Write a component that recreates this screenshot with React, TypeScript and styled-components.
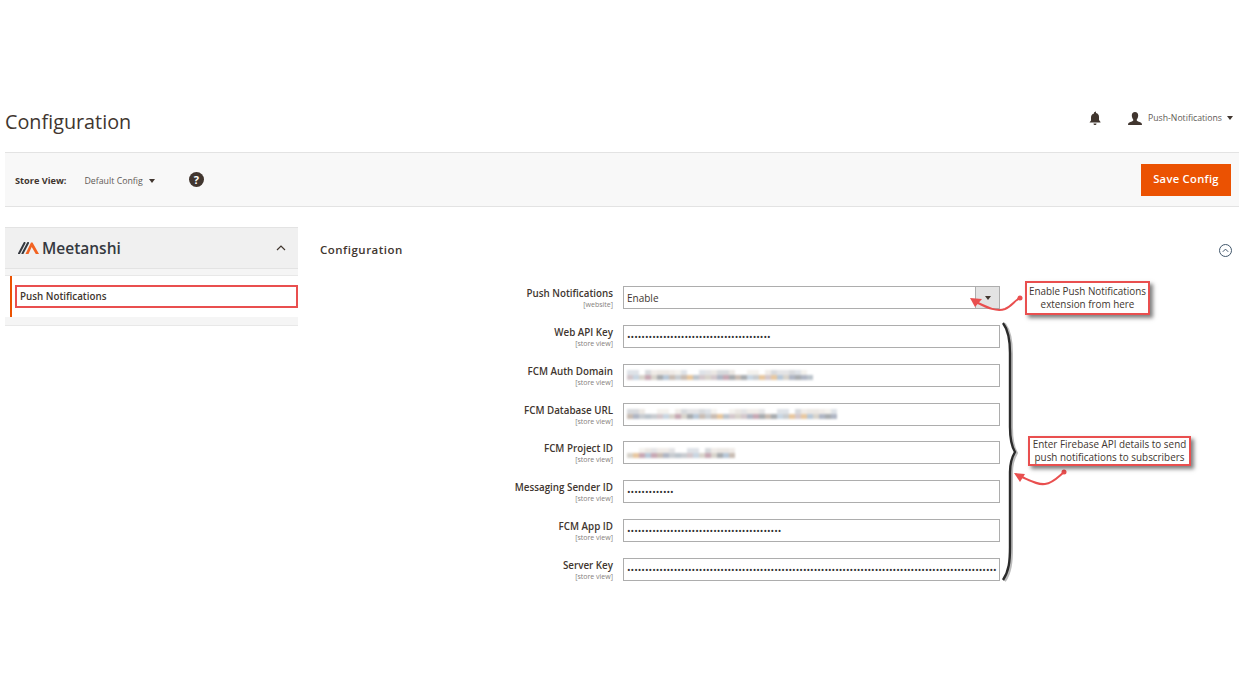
import React from 'react';
import styled, { createGlobalStyle } from 'styled-components';

const GlobalStyle = createGlobalStyle`
  html, body {
    margin: 0;
    padding: 0;
    background: #fff;
    font-family: "Open Sans", "Liberation Sans", sans-serif;
    color: #41362f;
  }
  * { box-sizing: border-box; }
`;

const Page = styled.div`
  position: relative;
  width: 1239px;
  height: 690px;
  overflow: hidden;
`;

const Header = styled.header`
  display: flex;
  align-items: flex-start;
  justify-content: space-between;
  height: 152px;
  padding: 107px 6px 0 5px;
`;

const Title = styled.h1`
  margin: 0;
  font-size: 19.800px;
  line-height: 30px;
  font-weight: 400;
  color: #41362f;
`;

const HeaderActions = styled.div`
  display: flex;
  align-items: center;
  height: 22px;
  color: #41362f;
`;

const UserIcon = styled.svg`
  margin-left: 27px;
`;

const UserName = styled.span`
  margin-left: 6px;
  font-size: 8.700px;
  color: #5f5a56;
`;

const Caret = styled.span<{ $gap: number }>`
  display: inline-block;
  margin-left: ${p => p.$gap}px;
  border-left: 3px solid transparent;
  border-right: 3px solid transparent;
  border-top: 4px solid #41362f;
`;

const ActionBar = styled.div`
  display: flex;
  align-items: center;
  height: 55px;
  margin-left: 5px;
  padding: 2px 8px 0 10px;
  background: #f8f8f8;
  border-top: 1px solid #e3e3e3;
  border-bottom: 1px solid #e3e3e3;
`;

const StoreLabel = styled.span`
  font-size: 9.200px;
  font-weight: 700;
  color: #41362f;
`;

const StoreValue = styled.span`
  margin-left: 18px;
  font-size: 8.800px;
  color: #5f5a56;
`;

const HelpIcon = styled.span`
  display: flex;
  align-items: center;
  justify-content: center;
  width: 15px;
  height: 15px;
  margin: -3px 0 0 34px;
  border-radius: 50%;
  background: #41362f;
  color: #fff;
  font-size: 11px;
  font-weight: 700;
`;

const SaveButton = styled.button`
  margin: -2px 0 0 auto;
  width: 90px;
  height: 32px;
  padding: 0 0 2px;
  border: 0;
  background: #eb5202;
  color: #fff;
  font-family: inherit;
  font-size: 11.200px;
  font-weight: 600;
  letter-spacing: 0.3px;
`;

const Columns = styled.div`
  display: flex;
  padding: 20px 0 0 5px;
`;

const Sidebar = styled.aside`
  flex: 0 0 293px;
`;

const BrandHeader = styled.div`
  display: flex;
  align-items: center;
  justify-content: space-between;
  height: 42px;
  padding: 0 12px 0 13px;
  background: #f0f0f0;
  border-top: 1px solid #e3e3e3;
  border-bottom: 1px solid #e3e3e3;
`;

const Brand = styled.div`
  display: flex;
  align-items: center;
  gap: 3px;
`;

const BrandName = styled.span`
  font-size: 15.500px;
  font-weight: 600;
  color: #35393f;
`;

const SidebarSpacer = styled.div<{ $height: number }>`
  height: ${p => p.$height}px;
  background: #f5f5f5;
  border-bottom: 1px solid #e8e8e8;
`;

const NavList = styled.div`
  display: flex;
  align-items: center;
  height: 41px;
  margin-left: 5px;
  padding-left: 3px;
  background: #fff;
  border-left: 2px solid #eb5202;
`;

const NavItem = styled.div`
  display: flex;
  align-items: center;
  flex: 1;
  height: 23px;
  padding-left: 3px;
  border: 2px solid #e94f4f;
  font-size: 9.800px;
  font-weight: 600;
  color: #41362f;
`;

const Main = styled.main`
  flex: 1;
  padding: 0 5px 0 22px;
`;

const SectionHead = styled.div`
  display: flex;
  align-items: center;
  justify-content: space-between;
  height: 44px;
`;

const SectionTitle = styled.h2`
  margin: 0;
  font-size: 11.500px;
  font-weight: 600;
  letter-spacing: 0.5px;
  color: #41362f;
`;

const CollapseIcon = styled.svg`
  margin: 2px 2px 0 0;
`;

const Form = styled.div`
  display: flex;
  flex-direction: column;
  padding-top: 15px;
`;

const Row = styled.div`
  display: flex;
  height: 38.850px;
`;

const LabelCell = styled.div`
  display: flex;
  flex-direction: column;
  align-items: flex-end;
  width: 303px;
  padding: 1px 10px 0 0;
`;

const FieldLabel = styled.span`
  font-size: 9.800px;
  line-height: 13px;
  font-weight: 600;
  color: #41362f;
`;

const Scope = styled.span`
  font-size: 7px;
  line-height: 9px;
  color: #85807c;
`;

const Field = styled.div`
  display: flex;
  align-items: center;
  width: 377px;
  height: 23px;
  padding-left: 3px;
  background: #fff;
  border: 1px solid #adadad;
  overflow: hidden;
  white-space: nowrap;
`;

const SelectField = styled(Field)`
  justify-content: space-between;
  padding-right: 0;
  font-size: 10px;
  color: #41362f;
`;

const SelectToggle = styled.span`
  display: flex;
  align-items: center;
  justify-content: center;
  width: 24px;
  height: 100%;
  background: #e3e3e3;
  border-left: 1px solid #adadad;
`;

const Dots = styled.span`
  font-size: 9.550px;
  line-height: 1;
  color: #303030;
`;

const Smudge = styled.div`
  display: grid;
  grid-auto-flow: column;
  grid-auto-columns: 6px;
  grid-template-rows: repeat(2, 5px);
  filter: blur(0.8px);
`;

const Pixel = styled.i<{ $tint: string }>`
  display: block;
  background: ${p => p.$tint};
`;

const Note = styled.div<{ $x: number; $y: number; $w: number; $h: number }>`
  position: absolute;
  left: ${p => p.$x}px;
  top: ${p => p.$y}px;
  display: flex;
  align-items: center;
  justify-content: center;
  width: ${p => p.$w}px;
  height: ${p => p.$h}px;
  background: #fff;
  border: 2px solid #e94f4f;
  box-shadow: 3px 3px 4px rgba(0, 0, 0, 0.5);
  font-size: 9.900px;
  line-height: 13px;
  text-align: center;
  color: #41362f;
`;

const Overlay = styled.svg`
  position: absolute;
  left: 960px;
  top: 280px;
  pointer-events: none;
`;

const topTints = ['#f0ece8', '#ffffff', '#e4e4e6', '#f4f2ee', '#d8dadd', '#ffffff', '#ece8e4', '#dfe3e8'];
const lowTints = ['#c9d6e2', '#c8a8b4', '#c9bdb4', '#e8c8a0', '#b8c8d8', '#c8ccd0', '#d4c8cc', '#b0b6c4', '#bcc4cc', '#d8d4cc', '#a8acb0'];

// stands in for the blurred-out values: a light row above a darker row
const smudge = (cols: number, seed: number) => {
  const out: string[] = [];
  for (let c = 0; c < cols; c++) {
    const n = (c * 7 + seed * 3 + ((c * c) % 5)) * 13;
    out.push(topTints[n % topTints.length], lowTints[n % lowTints.length]);
  }
  return out;
};

const fields = [
  { label: 'Web API Key', dots: 40 },
  { label: 'FCM Auth Domain', cols: 31, seed: 1 },
  { label: 'FCM Database URL', cols: 35, seed: 4 },
  { label: 'FCM Project ID', cols: 18, seed: 7 },
  { label: 'Messaging Sender ID', dots: 13 },
  { label: 'FCM App ID', dots: 43 },
  { label: 'Server Key', dots: 103 },
];

const ChevronUp = () => (
  <svg width="10" height="6" viewBox="0 0 10 6" fill="none" stroke="#41362f" strokeWidth="1.2">
    <path d="M1 5l4-4 4 4" />
  </svg>
);

const Logo = () => (
  <svg width="21" height="12" viewBox="0 0 21 12">
    <path d="M1 11.500L6.500 1" fill="none" stroke="#35393f" strokeWidth="2" strokeLinecap="round" />
    <path d="M4.500 11.500L10 1" fill="none" stroke="#35393f" strokeWidth="2" strokeLinecap="round" />
    <path d="M7.500 12L13 .5h1.500L21 12h-3.200L13.700 5 10.500 12z" fill="#f26322" />
  </svg>
);

export default function App() {
  return (
    <Page>
      <GlobalStyle />
      <Header>
        <Title>Configuration</Title>
        <HeaderActions>
          <svg width="12" height="14" viewBox="0 0 12 14" fill="#41362f">
            <path d="M6 0.500c.6 0 1 .4 1 1v.5c2 .5 3 2 3 4v3l1.500 2v.5H.500V11.500L2 9.500v-3c0-2 1-3.500 3-4v-.5c0-.6.400-1 1-1zM4.500 12.500h3c0 1-.7 1.500-1.500 1.500s-1.500-.5-1.500-1.500z" />
          </svg>
          <UserIcon width="14" height="13" viewBox="0 0 14 13" fill="#41362f">
            <path d="M7 0c2 0 3.200 1.500 3.200 3.500S9 7.500 8.600 8c.2.800 1 1.300 2.400 1.800 1.600.5 3 1 3 3.200H0c0-2.200 1.400-2.700 3-3.200C4.400 9.300 5.200 8.800 5.400 8 5 7.500 3.800 5.500 3.800 3.500S5 0 7 0z" />
          </UserIcon>
          <UserName>Push-Notifications</UserName>
          <Caret $gap={5} />
        </HeaderActions>
      </Header>

      <ActionBar>
        <StoreLabel>Store View:</StoreLabel>
        <StoreValue>Default Config</StoreValue>
        <Caret $gap={6} />
        <HelpIcon>?</HelpIcon>
        <SaveButton>Save Config</SaveButton>
      </ActionBar>

      <Columns>
        <Sidebar>
          <BrandHeader>
            <Brand>
              <Logo />
              <BrandName>Meetanshi</BrandName>
            </Brand>
            <ChevronUp />
          </BrandHeader>
          <SidebarSpacer $height={7} />
          <NavList>
            <NavItem>Push Notifications</NavItem>
          </NavList>
          <SidebarSpacer $height={9} />
        </Sidebar>

        <Main>
          <SectionHead>
            <SectionTitle>Configuration</SectionTitle>
            <CollapseIcon width="13" height="13" viewBox="0 0 13 13" fill="none" stroke="#41566b" strokeWidth="1">
              <circle cx="6.500" cy="6.500" r="6" />
              <path d="M3.800 7.800l2.700-2.700 2.700 2.700" />
            </CollapseIcon>
          </SectionHead>
          <Form>
            <Row>
              <LabelCell>
                <FieldLabel>Push Notifications</FieldLabel>
                <Scope>[website]</Scope>
              </LabelCell>
              <SelectField>
                Enable
                <SelectToggle>
                  <Caret $gap={0} />
                </SelectToggle>
              </SelectField>
            </Row>
            {fields.map(f => (
              <Row key={f.label}>
                <LabelCell>
                  <FieldLabel>{f.label}</FieldLabel>
                  <Scope>[store view]</Scope>
                </LabelCell>
                <Field>
                  {f.dots ? (
                    <Dots>{'•'.repeat(f.dots)}</Dots>
                  ) : (
                    <Smudge>
                      {smudge(f.cols!, f.seed!).map((tint, i) => (
                        <Pixel key={i} $tint={tint} />
                      ))}
                    </Smudge>
                  )}
                </Field>
              </Row>
            ))}
          </Form>
        </Main>
      </Columns>

      <Overlay width="70" height="310" viewBox="960 280 70 310">
        <path d="M1003 323c6 8 7 18 7 30v74c0 12 2 20 5 25-3 5-5 11-5 20v75c0 14-1 24-7 33" fill="none" stroke="#bbb" strokeWidth="3" transform="translate(1.500 1)" />
        <path d="M1003 323c6 8 7 18 7 30v74c0 12 2 20 5 25-3 5-5 11-5 20v75c0 14-1 24-7 33" fill="none" stroke="#2b2b2b" strokeWidth="2.400" />
      </Overlay>
      <Overlay width="120" height="220" viewBox="960 280 120 220">
        <path d="M1020 298c-5 2-8 8-15 11-8 3-17-1-29-7" fill="none" stroke="#e94f4f" strokeWidth="2" />
        <circle cx="1020" cy="298" r="2.500" fill="#e94f4f" />
        <path d="M970 298l12 1-7 8z" fill="#e94f4f" />
        <path d="M1064 472c-5 4-11 11-19 12-7 1-14-3-23-7" fill="none" stroke="#e94f4f" strokeWidth="2" />
        <circle cx="1064" cy="472" r="2.500" fill="#e94f4f" />
        <path d="M1014 473l11 1-5 8z" fill="#e94f4f" />
      </Overlay>

      <Note $x={1025} $y={281} $w={125} $h={34}>
        Enable Push Notifications
        <br />
        extension from here
      </Note>
      <Note $x={1028} $y={436} $w={163} $h={30}>
        Enter Firebase API details to send
        <br />
        push notifications to subscribers
      </Note>
    </Page>
  );
}
